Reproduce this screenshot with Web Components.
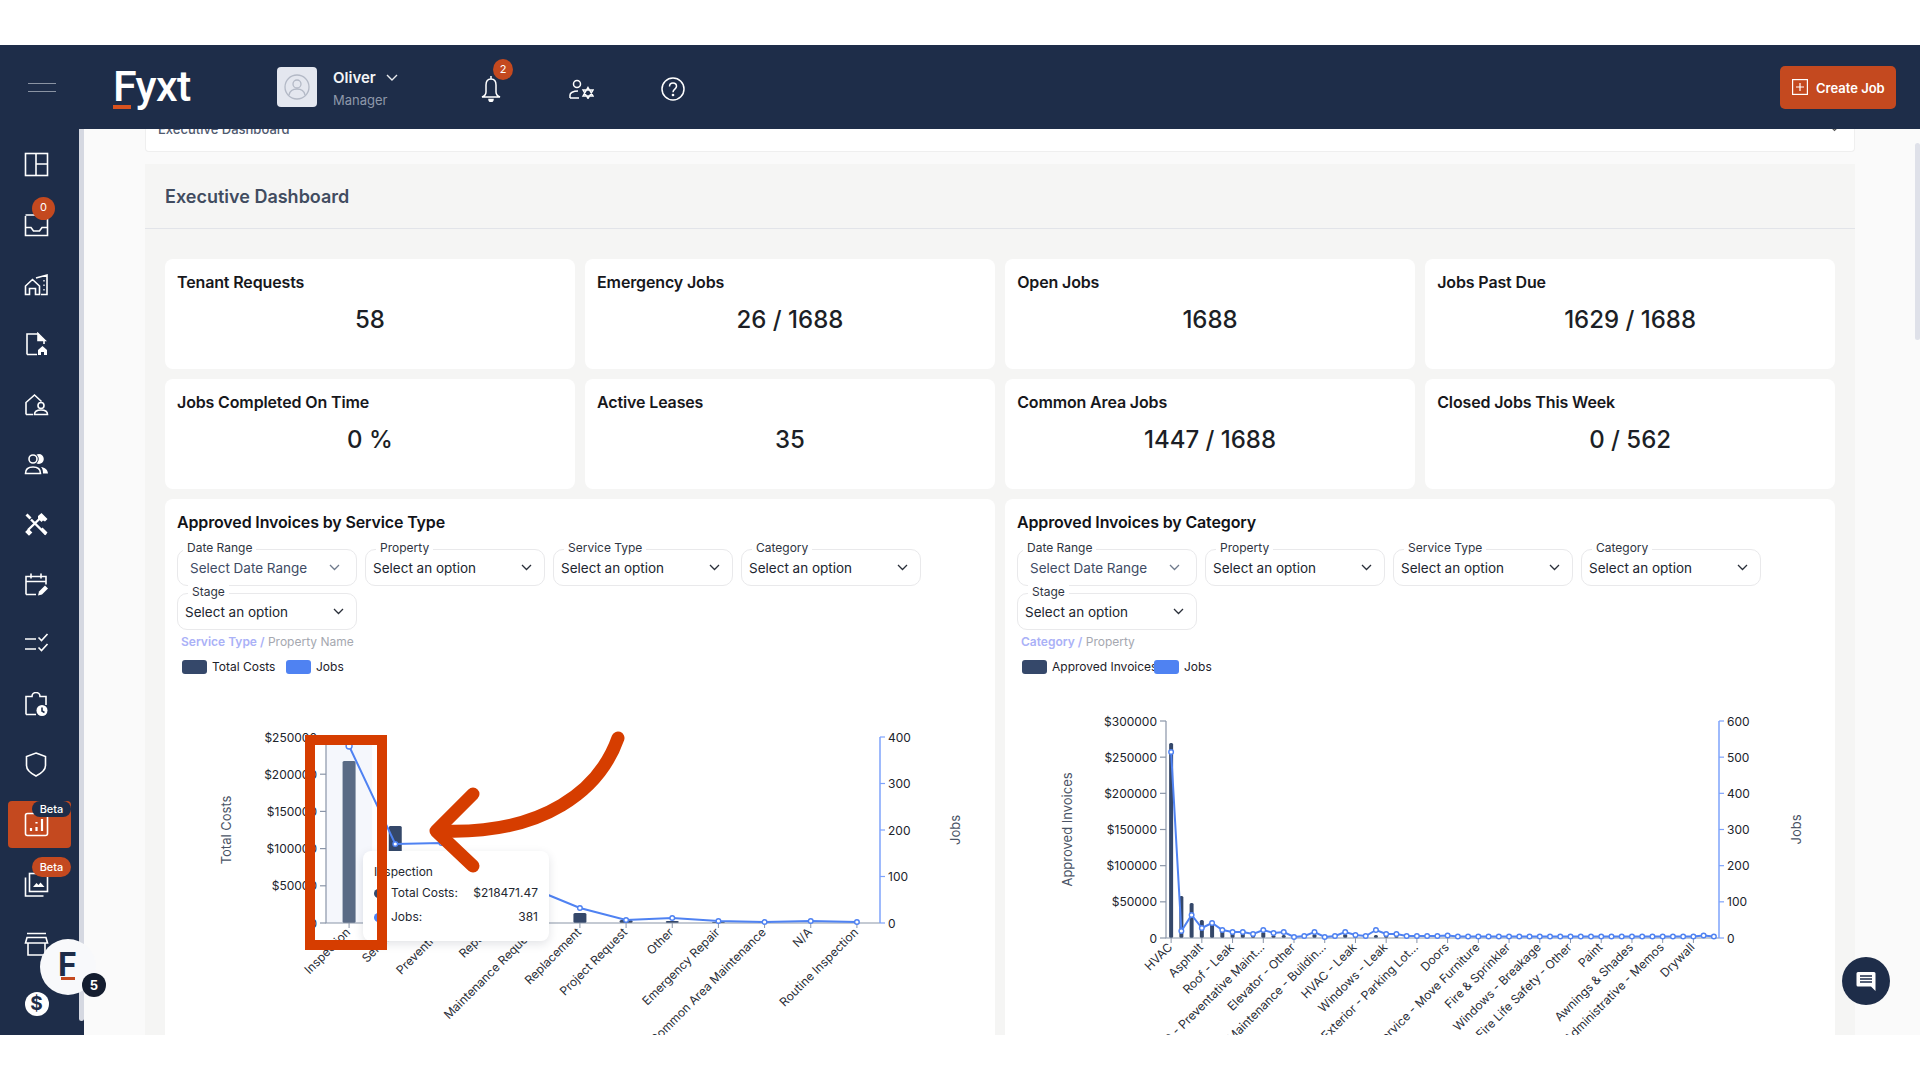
<!DOCTYPE html>
<html lang="en">
<head>
<meta charset="utf-8">
<title>Fyxt Executive Dashboard</title>
<style>
html,body{margin:0;padding:0;background:#fff;font-family:Inter,"Liberation Sans",sans-serif;}
body{height:1080px;overflow:hidden;padding:45px 0;box-sizing:border-box;}
</style>
</head>
<body>
<fx-app>
  <fx-header slot="header"></fx-header>
  <fx-sidebar slot="side"></fx-sidebar>
  <fx-dashboard slot="main">
    <fx-kpi label="Tenant Requests" value="58"></fx-kpi>
    <fx-kpi label="Emergency Jobs" value="26 / 1688"></fx-kpi>
    <fx-kpi label="Open Jobs" value="1688"></fx-kpi>
    <fx-kpi label="Jobs Past Due" value="1629 / 1688"></fx-kpi>
    <fx-kpi label="Jobs Completed On Time" value="0 %"></fx-kpi>
    <fx-kpi label="Active Leases" value="35"></fx-kpi>
    <fx-kpi label="Common Area Jobs" value="1447 / 1688"></fx-kpi>
    <fx-kpi label="Closed Jobs This Week" value="0 / 562"></fx-kpi>
    <fx-chart-card slot="charts" heading="Approved Invoices by Service Type" first="Service Type" second="Property Name" series="Total Costs" variant="service"></fx-chart-card>
    <fx-chart-card slot="charts" heading="Approved Invoices by Category" first="Category" second="Property" series="Approved Invoices" variant="category"></fx-chart-card>
  </fx-dashboard>
  <fx-chat slot="float"></fx-chat>
  <fx-bubble slot="float"></fx-bubble>
</fx-app>
<script>
const NAVY='#1e2d49',ORANGE='#c4491f',BLUE='#4f82f2',DARK='#35486a';
function def(name,html,init){
  customElements.define(name,class extends HTMLElement{
    connectedCallback(){
      if(this.shadowRoot)return;
      const r=this.attachShadow({mode:'open'});
      r.innerHTML=typeof html==='function'?html(this):html;
      if(init)init(this,r);
    }
  });
}

def('fx-app',`<style>
:host{display:block;position:relative;height:990px;overflow:hidden;background:#fafafa}
.hd{height:84px;position:relative;z-index:3}
.bd{display:flex;height:906px}
.sd{flex:0 0 83.5px;position:relative;z-index:2}
.mn{flex:1;min-width:0;overflow:hidden;position:relative}
.thumb{position:absolute;right:0;top:14px;width:5px;height:197px;background:#dfe1e9;border-radius:3px}
</style>
<div class="hd"><slot name="header"></slot></div>
<div class="bd"><div class="sd"><slot name="side"></slot></div><div class="mn"><slot name="main"></slot><div class="thumb"></div></div></div>
<slot name="float"></slot>`);

def('fx-header',`<style>
:host{display:flex;align-items:center;height:84px;background:${NAVY};color:#fff;padding:0 24px 0 28px;box-sizing:border-box}
.ham{width:28px;height:9px;border-top:1.5px solid #8a93a3;border-bottom:1.5px solid #8a93a3;box-sizing:border-box}
.logo{margin-left:57px;width:164px;font:500 43px/44px Roboto,sans-serif;letter-spacing:-.6px;position:relative;margin-top:-2px}
.logo i{position:absolute;left:0;bottom:-1px;width:18px;height:4px;background:#d9531f}
.av{width:40px;height:40px;border-radius:4px;background:#e4e7ef;display:flex;align-items:center;justify-content:center}
.who{margin-left:16px;width:128px;font-size:14px;margin-top:2px}
.nm{font:600 15px/20px Inter,sans-serif;display:flex;align-items:center;gap:10px;color:#f4f5f7}
.rl{font:400 13px/18px Inter,sans-serif;color:#8e98a9;margin-top:3px}
.bell{margin-left:20px;position:relative;width:20px;height:26px;margin-top:4px}
.bdg{position:absolute;left:12px;top:-17px;width:20px;height:21px;border-radius:50%;background:${ORANGE};font:400 11px/21px Inter,sans-serif;text-align:center;color:#fff}
.gear{margin-left:68px;width:25px;height:20px;margin-top:4px}
.help{margin-left:67px;width:24px;height:24px;margin-top:4px}
svg{display:block}
button{margin-left:auto;height:43px;width:116px;background:${ORANGE};border:0;border-radius:5px;color:#fff;display:flex;align-items:center;padding:0 0 0 12px;font:600 13px Inter,sans-serif;gap:8px;box-sizing:border-box}
button span{padding-top:2px}
</style>
<div class="ham"></div>
<div class="logo">Fyxt<i></i></div>
<div class="av"><svg width="28" height="28" viewBox="0 0 28 28" fill="none" stroke="#b3b9c6" stroke-width="1.3"><circle cx="14" cy="14" r="12"/><circle cx="14" cy="11" r="4"/><path d="M6 22c1-5 4-6 8-6s7 1 8 6"/></svg></div>
<div class="who"><div class="nm">Oliver <svg width="12" height="7" viewBox="0 0 12 7" fill="none" stroke="#e9ebef" stroke-width="1.4"><path d="M1 1l5 5 5-5"/></svg></div><div class="rl">Manager</div></div>
<div class="bell"><svg width="20" height="26" viewBox="0 0 20 26" fill="none" stroke="#fff" stroke-width="1.5"><path d="M10 0v3M10 3C7 3 5 5 5 9v7c0 2-1.500 4-4 5h18c-2.500-1-4-3-4-5V9c0-4-2-6-5-6z"/><path d="M8 23.500a2 2 0 0 0 4 0z" fill="#fff"/></svg><span class="bdg">2</span></div>
<div class="gear"><svg width="25" height="20" viewBox="0 0 25 20" fill="none" stroke="#fff" stroke-width="1.5"><circle cx="8" cy="5" r="3.5"/><path d="M1 19v-3c0-2 3-4 8-4M1 19h9"/><path d="M19 8.500l5 8.500H14zM19 19.500L14 11h10z" stroke-width="1.4"/></svg></div>
<div class="help"><svg width="24" height="24" viewBox="0 0 24 24" fill="none" stroke="#fff" stroke-width="1.5"><circle cx="12" cy="12" r="11"/><path d="M8.500 9.500c0-2.200 1.600-3.500 3.500-3.500s3.500 1.300 3.500 3.300c0 2.700-3.500 2.900-3.500 6"/><circle cx="12" cy="18" r=".6" fill="#fff"/></svg></div>
<button><svg width="16" height="16" viewBox="0 0 16 16" fill="none" stroke="#fff" stroke-width="1.2"><rect x=".6" y=".6" width="14.8" height="14.8"/><path d="M8 4v8M4 8h8"/></svg><span>Create Job</span></button>`);

const ICONS=[
 `<rect x="1.5" y="1.5" width="22" height="22"/><path d="M12 1.500v22M12 12h11.500"/>`,
 `<path d="M1.500 4v19.500h22V4M1.500 3h22M1.500 15.500h5.500l2.500 3.500h6l2.500-3.500h5.500"/>`,
 `<path d="M1.500 22.500V14l7-6.500 7 6.500v8.500h-4v-6h-6v6zM12 6l11-3v19.500h-6"/><path d="M20 8v1.500M20 12.500v1.500M20 17v1.500" stroke-width="1.3"/>`,
 `<path d="M3 22.500V2h11.500M3 22.500h10M20 8v4"/><path d="M14 1.500l7 7h-7z" fill="#fff"/><path d="M14 23v-5l4.500-4 4.500 4v5h-3v-3h-3v3z" fill="#fff" stroke="none"/>`,
 `<path d="M2 22.500V10.500l8.500-7.500 7 6.500M2 22.500h7"/><circle cx="17" cy="13.500" r="3"/><path d="M10.500 22.500c0-3.500 3-4.500 6.500-4.500s6.500 1 6.500 4.500z"/>`,
 `<circle cx="9" cy="7" r="4"/><path d="M1.500 21.500c0-5 3.500-6.500 7.500-6.500s7.500 1.500 7.500 6.500z"/><path d="M14 3c3-.5 5 1.500 5 4s-2 4.500-5 4c2-2.500 2-5.500 0-8z" fill="#fff"/><path d="M17 15c4 .5 6.500 2.500 7 6.500h-5c0-3-.5-5-2-6.500z" fill="#fff" stroke="none"/>`,
 `<path d="M7 7.500l15 15M19 3.500L4 18" stroke-width="2.4"/><path d="M1.500 3.500l2-2 4 4-2 2z" fill="#fff" stroke="none"/><path d="M14 4l3.500-3 6 6-2.500 2.500-2-1-1.500 1.500-3.500-3.500z" fill="#fff" stroke="none"/><path d="M2 20l2.500-2.500 3 3L5 23z" fill="#fff" stroke-width="1.2"/><path d="M16.500 17.500l2-2 5 5-2.500 2.500z" fill="#fff" stroke="none"/>`,
 `<path d="M2 22.500V4.500h20v8M2 22.500h10M2 9.500h20M7 1.500v5M17 1.500v5"/><path d="M14 23.500l1-4 6-6 3 3-6 6z" fill="#fff" stroke="none"/>`,
 `<path d="M1 7h11M1 17h11M14.500 5.500l3 3L23.500 2M14.500 15.500l3 3 6-6.500"/>`,
 `<path d="M2 22.500V4.500h6a4 4 0 0 1 8 0h6V13M2 22.500h10"/><circle cx="18" cy="18.500" r="5.500" fill="#fff" stroke="none"/><path d="M18 15.500v3.500l2.500 1.500" stroke="${NAVY}"/>`,
 `<path d="M12 1l9.500 3.500v9c0 4.500-4.500 8-9.500 10.500-5-2.500-9.500-6-9.500-10.500v-9z"/>`,
 `<rect x="1.5" y="1.5" width="22" height="22" rx="2"/><path d="M7 16v3M12.500 10v1.500M12.500 15v4M18 7v12" stroke-width="2.2"/>`,
 `<path d="M1.500 5.500v18.500h18"/><rect x="5.5" y="1.5" width="18" height="18"/><path d="M9 15l3.500-4 2 2 2-2.500 4 4.500z" fill="#fff" stroke="none"/>`,
 `<path d="M3 1.500h19M3 5.500h19l1.500 5.500h-22zM4 11v12h17V11"/>`,
];
const NAMES=['Dashboard','Inbox','Properties','Documents','Tenants','Contacts','Vendors','Calendar','Tasks','Schedule','Insurance','Reports','Gallery','Marketplace'];
def('fx-sidebar',`<style>
:host{display:block;height:100%;background:${NAVY};position:relative;padding-top:5px;box-sizing:border-box}
.sb{position:absolute;right:0;top:0;width:5px;height:892px;background:#d5d8e1;border-radius:0 0 3px 3px}
.it{height:60px;width:73px;display:flex;align-items:center;justify-content:center;position:relative}
.it svg{display:block;position:relative}
.ac{position:absolute;left:8px;right:2px;top:7px;height:47px;background:${ORANGE};border-radius:4px}
.b0{position:absolute;left:32px;top:3px;width:23px;height:23px;border-radius:50%;background:${ORANGE};color:#fff;font:400 11px/21px Inter,sans-serif;text-align:center}
.pl{position:absolute;left:32px;width:39px;color:#fff;font:500 11px/16px Inter,sans-serif;text-align:center;border-radius:10px}
.dollar{width:24px;height:24px;border-radius:50%;background:#fff;color:${NAVY};font:700 19px/24px Inter,sans-serif;text-align:center}
</style><div class="sb"></div><div id="l"></div>`,(h,r)=>{
  const l=r.getElementById('l');
  let html='';
  ICONS.forEach((p,i)=>{
    html+=`<div class="it" title="${NAMES[i]}">`+
    (i===11?'<div class="ac"></div>':'')+
    `<svg width="25" height="25" viewBox="0 0 25 25" fill="none" stroke="#fff" stroke-width="1.6">${p}</svg>`+
    (i===1?'<span class="b0">0</span>':'')+
    (i===11?`<span class="pl" style="top:7px;background:${NAVY}">Beta</span>`:'')+
    (i===12?`<span class="pl" style="top:3px;line-height:20px;background:${ORANGE}">Beta</span>`:'')+
    `</div>`;
  });
  html+=`<div class="it"><div class="dollar">$</div></div>`;
  l.innerHTML=html;
});

def('fx-dashboard',`<style>
:host{display:block;padding:0 65px 0 61.5px;font-family:Inter,sans-serif}
.crumb{height:23px;margin-top:-1px;background:#fff;border:1px solid #efefef;border-top:0;border-radius:0 0 4px 4px;position:relative;overflow:hidden;box-sizing:content-box;display:flex;justify-content:space-between}
.crumb span{font:500 13px/16px Inter,sans-serif;color:#4f5a6f;margin:-7px 0 0 12px;display:block}
.crumb svg{margin:-3px 14px 0 0;display:block}
.panel{margin-top:12px;background:#f5f5f4;height:1200px}
.ph{height:64px;border-bottom:1px solid #e2e4e9;padding-left:20px;font:600 18px/65px Inter,sans-serif;color:#414c60}
.bd{padding:30px 20px 0}
.kp{display:grid;grid-template-columns:repeat(4,1fr);gap:10px 10.3px}
.ch{display:grid;grid-template-columns:1fr 1fr;gap:10px;margin-top:10px}
</style>
<div class="crumb"><span>Executive Dashboard</span><svg width="11" height="7" viewBox="0 0 11 7" fill="none" stroke="#555" stroke-width="1.2"><path d="M1 1l4.500 4.500L10 1"/></svg></div>
<div class="panel"><div class="ph">Executive Dashboard</div><div class="bd"><div class="kp"><slot></slot></div><div class="ch"><slot name="charts"></slot></div></div></div>`);

def('fx-kpi',h=>`<style>
:host{display:block;height:110px;background:#fff;border-radius:8px;padding:13px 12px 0;box-sizing:border-box;color:#111}
.t{font:600 16px/20px Inter,sans-serif;color:#17181c;letter-spacing:-.14px}
.v{font:500 24px/29px Inter,sans-serif;text-align:center;margin-top:13px;color:#1c1f26}
</style><div class="t">${h.getAttribute('label')}</div><div class="v">${h.getAttribute('value')}</div>`);

def('fx-filter',h=>{
  const date=h.hasAttribute('date');
  const stage=h.getAttribute('label');
  return `<style>
:host{display:block;width:180px;height:37px;border:1px solid #e9e9eb;border-radius:10px;position:relative;box-sizing:border-box;background:#fff}
.l{position:absolute;left:${stage==='Date Range'?5:10}px;top:-9px;background:#fff;padding:0 4px;font:400 12px/14px Inter,sans-serif;color:#2f3542;}
.r{display:flex;align-items:center;justify-content:space-between;height:100%;padding:0 ${date?16:12}px 0 ${date?12:7}px}
.s{font:400 13.5px/16px Inter,sans-serif;color:${date?'#3e4b65':'#20252f'}}
svg{display:block}
</style><span class="l">${stage}</span><div class="r"><span class="s">${date?'Select Date Range':'Select an option'}</span><svg width="11" height="7" viewBox="0 0 11 7" fill="none" stroke="${date?'#6f7a8c':'#2a2f3a'}" stroke-width="1.3"><path d="M1 1l4.500 4.500L10 1"/></svg></div>`});

def('fx-chart-card',h=>`<style>
:host{display:block;height:560px;background:#fff;border-radius:8px;padding:13px 0 0 12px;box-sizing:border-box;position:relative}
h3{margin:0 0 17px;font:600 16px/20px Inter,sans-serif;color:#111318;letter-spacing:-.14px}
.f{display:flex;flex-wrap:wrap;gap:7px 8px;width:760px}
.bc{margin:4px 0 0 4px;font:400 12px/16px Inter,sans-serif;color:#a5a8b0}
.bc b{font-weight:600;color:#aab1f7}
.lg{display:flex;align-items:center;margin:10px 0 0 5px;height:14px;font:400 12px/14px Inter,sans-serif;color:#1d2129;white-space:nowrap}
.sw{flex:none;width:25px;height:14px;border-radius:3px}
.nm{margin-left:5px}
fx-chart{margin:5px 0 0 -12px}
</style>
<h3>${h.getAttribute('heading')}</h3>
<div class="f">
<fx-filter label="Date Range" date></fx-filter><fx-filter label="Property"></fx-filter><fx-filter label="Service Type"></fx-filter><fx-filter label="Category"></fx-filter><fx-filter label="Stage"></fx-filter>
</div>
<div class="bc"><b>${h.getAttribute('first')} /</b> ${h.getAttribute('second')}</div>
<div class="lg"><span class="sw" style="background:${DARK}"></span><span class="nm" style="${h.getAttribute('variant')==='category'?'width:102px':'width:74px'}">${h.getAttribute('series')}</span><span class="sw" style="background:${BLUE};position:relative"></span><span class="nm">Jobs</span></div>
<fx-chart variant="${h.getAttribute('variant')}"></fx-chart>`);

const CFG={
 service:{ox:165,left:326,right:880,top:738,base:924,
  lTicks:['0','$50000','$100000','$150000','$200000','$250000'],
  rTicks:['0','100','200','300','400'],lTitle:'Total Costs',lTitleX:231,rTitleX:960,tw:13,
  labels:['Inspection','Service','Preventive','Repair','Maintenance Request','Replacement','Project Request','Other','Emergency Repair','Common Area Maintenance','N/A','Routine Inspection'],step:1,n:12,
  bars:[762,827,885,890,905,914,921,922,923,923.5,924,924],
  line:[747,845,844,862,890,909,921,919,922,923,922,923],hi:0},
 category:{ox:1005,left:1166,right:1719,top:722,base:939,
  lTicks:['0','$50000','$100000','$150000','$200000','$250000','$300000'],
  rTicks:['0','100','200','300','400','500','600'],lTitle:'Approved Invoices',lTitleX:1072,rTitleX:1801,tw:4,
  labels:['HVAC','Asphalt','Roof - Leak','HVAC - Preventative Maint...','Elevator - Other','Maintenance - Buildin...','HVAC - Leak','Windows - Leak','Exterior - Parking Lot...','Doors','Service - Move Furniture','Fire & Sprinkler','Windows - Breakage','Fire Life Safety - Other','Paint','Awnings & Shades','Administrative - Memos','Drywall'],step:3,n:54,
  bars:[744,897,904,921,924,932,933,934,935,933,936,936,938,937,935,938,938,935,938,937,936,936,937,938].concat(Array(30).fill(938.5)),
  line:[753,932,916,929,924,931,933,933,935,931,934,933,938,937,933,938,937,933,936,937,931,935,935,937,937,937,937,936.5].concat(Array(24).fill(937.5),[936.5,937.5])}
};
def('fx-chart',h=>{
  const c=CFG[h.getAttribute('variant')];
  const band=(c.right-c.left)/c.n;
  const cx=i=>c.left+band*(i+.5);
  const T='font-family="Inter,sans-serif" font-size="12"';
  const TT='font-family="Inter,sans-serif" font-size="13"';
  let s='';
  if(c.hi!==undefined) s+=`<rect x="${c.left}" y="${c.top}" width="${band}" height="${c.base-c.top}" fill="#f5f7fc"/>`;
  c.bars.forEach((y,i)=>{const w=c.tw;s+=`<rect x="${cx(i)-w/2}" y="${y}" width="${w}" height="${c.base-y}" rx="1.5" fill="${i===c.hi?'#5a6b85':DARK}"/>`;});
  s+=`<path d="M${c.left} ${c.top}V${c.base}H${c.right}" fill="none" stroke="#8a95a8" stroke-width="1.2"/>`;
  const lN=c.lTicks.length-1;
  c.lTicks.forEach((t,i)=>{const y=c.base-(c.base-c.top)*i/lN;s+=`<path d="M${c.left-6} ${y}H${c.left}" stroke="#8a95a8" stroke-width="1.2"/><text x="${c.left-9}" y="${y+4.5}" text-anchor="end" ${T} fill="#20242c">${t}</text>`;});
  const rN=c.rTicks.length-1;
  s+=`<path d="M${c.right} ${c.top}V${c.base}" stroke="#7ea3fb" stroke-width="1.5"/>`;
  c.rTicks.forEach((t,i)=>{const y=c.base-(c.base-c.top)*i/rN;s+=`<path d="M${c.right} ${y}h5" stroke="#7ea3fb" stroke-width="1.2"/><text x="${c.right+8}" y="${y+4.5}" ${T} fill="#20242c">${t}</text>`;});
  c.labels.forEach((t,i)=>{const x=cx(i*c.step);s+=`<path d="M${x} ${c.base}v5" stroke="#8a95a8"/><text transform="translate(${x+2} ${c.base+10}) rotate(-45)" text-anchor="end" ${T} fill="#2a2e37">${t}</text>`;});
  const my=(c.top+c.base)/2;
  s+=`<text transform="translate(${c.lTitleX} ${my}) rotate(-90)" text-anchor="middle" ${TT} fill="#4a5466">${c.lTitle}</text>`;
  s+=`<text transform="translate(${c.rTitleX} ${my}) rotate(-90)" text-anchor="middle" ${TT} fill="#4a5466">Jobs</text>`;
  s+=`<polyline points="${c.line.map((y,i)=>cx(i)+','+y).join(' ')}" fill="none" stroke="${BLUE}" stroke-width="2"/>`;
  c.line.forEach((y,i)=>{s+=`<circle cx="${cx(i)}" cy="${y}" r="${i===c.hi?3:2.3}" fill="#fff" stroke="${BLUE}" stroke-width="1.4"/>`;});
  const over=h.getAttribute('variant')==='service';
  return `<style>
:host{display:block;position:relative;width:829px;height:360px}
svg{position:absolute;left:0;top:0;display:block;overflow:visible}
.tip{position:absolute;left:${363-c.ox}px;top:${852-680}px;width:186px;height:90px;box-sizing:border-box;background:#fff;border-radius:8px;box-shadow:0 3px 10px rgba(30,40,60,.13);padding:11px 11px 0;font:400 12px/20px Inter,sans-serif;color:#242831}
.row{display:flex;align-items:center;height:24px}
.row i{width:9px;height:9px;border-radius:50%;margin-right:8px;flex:none}
.row b{font-weight:400;margin-left:auto}
</style>
<svg width="829" height="360" viewBox="${c.ox} 680 829 360">${s}</svg>
${over?`<div class="tip"><div style="height:19px">Inspection</div><div class="row"><i style="background:${DARK}"></i>Total Costs:<b>$218471.47</b></div><div class="row"><i style="background:${BLUE}"></i>Jobs:<b>381</b></div></div>
<svg width="829" height="360" viewBox="${c.ox} 680 829 360" fill="none" stroke="#d63d00"><rect x="310" y="741" width="72" height="205" stroke-width="10"/><path d="M618 739C600 790 545 836 441 832" stroke-width="13" stroke-linecap="round"/><path d="M473 795L436 832L473 867" stroke-width="13" stroke-linecap="round" stroke-linejoin="round"/></svg>`:''}`;
});

def('fx-chat',`<style>
:host{position:absolute;left:1842px;top:912px;width:48px;height:48px;border-radius:50%;background:${NAVY};display:flex;align-items:center;justify-content:center;z-index:4}
</style><svg width="22" height="22" viewBox="0 0 22 22"><path d="M3 2h16a1.500 1.500 0 0 1 1.500 1.500V21L16 16.500H3A1.500 1.500 0 0 1 1.500 15V3.500A1.500 1.500 0 0 1 3 2z" fill="#fff"/><path d="M5 6h12M5 9h12M5 12h12" stroke="${NAVY}" stroke-width="1.6"/></svg>`);

def('fx-bubble',`<style>
:host{position:absolute;left:40px;top:894px;width:56px;height:56px;border-radius:50%;background:#f8f9fb;z-index:4;display:block}
.f{position:absolute;left:18px;top:7px;font:700 32px/38px Inter,sans-serif;color:${NAVY}}
i{position:absolute;left:21px;top:38px;width:14px;height:3px;background:${ORANGE}}
b{position:absolute;left:42px;top:34px;width:24px;height:24px;border-radius:50%;background:#141d2f;color:#fff;font:700 13px/24px Inter,sans-serif;text-align:center}
</style><span class="f">F</span><i></i><b>5</b>`);
</script>
</body>
</html>
